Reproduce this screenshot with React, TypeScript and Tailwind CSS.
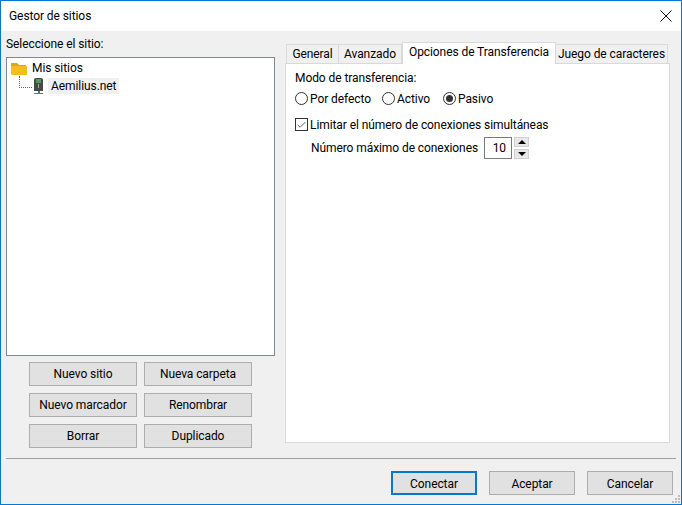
import { Check } from "lucide-react";

const siteButtons = ["Nuevo sitio", "Nueva carpeta", "Nuevo marcador", "Renombrar", "Borrar", "Duplicado"];

const Radio = ({ label, checked, width }: { label: string; checked?: boolean; width: string }) => (
  <div className={`flex items-center gap-[2px] ${width}`}>
    <span className="flex h-[13px] w-[13px] shrink-0 items-center justify-center rounded-full border border-[#333] bg-white">
      {checked && <span className="h-[7px] w-[7px] rounded-full bg-[#333]" />}
    </span>
    <span>{label}</span>
  </div>
);

const Tab = ({ label, className }: { label: string; className: string }) => (
  <div className={`flex h-[19px] items-center justify-center whitespace-nowrap border border-b-0 border-[#d9d9d9] bg-[#f0f0f0] ${className}`}>
    {label}
  </div>
);

const FolderIcon = () => (
  <svg width="16" height="15" viewBox="0 0 16 15">
    <path d="M0 2 H6 L8 4 H15 V7 H0 Z" fill="#e0a50f" />
    <path d="M0 5 H16 V14 H1 L0 13 Z" fill="#f5bd1f" />
  </svg>
);

const ServerIcon = () => (
  <svg width="11" height="17" viewBox="0 0 11 17">
    <path d="M1 2 Q1 0 3 0 H8 Q10 0 10 2 V13 H1 Z" fill="#474a47" />
    <rect x="3" y="1" width="5" height="4" fill="#4f9a58" />
    <rect x="5" y="6" width="1" height="4" fill="#a5aaa5" />
    <rect x="5" y="13" width="2" height="3" fill="#2f7fd0" />
    <rect x="1" y="15" width="9" height="1" fill="#2f7fd0" />
  </svg>
);

export default function App() {
  return (
    <div className="flex h-[505px] w-[682px] flex-col overflow-hidden border border-[#0078d7] bg-[#f0f0f0] font-['Roboto',sans-serif] text-[12px] leading-[16px] tracking-[-0.08px] text-black">
      {/* Title bar */}
      <div className="flex h-[30px] shrink-0 items-center justify-between bg-white pl-[8px] pr-[9px]">
        <span>Gestor de sitios</span>
        <svg width="12" height="12" viewBox="0 0 12 12">
          <path d="M0.5 0.5 L11.5 11.5 M11.5 0.5 L0.5 11.5" stroke="#111" strokeWidth="1" fill="none" />
        </svg>
      </div>

      <div className="relative flex flex-1 flex-col">
        <div className="flex h-[427px] shrink-0">
          {/* Site tree */}
          <div className="flex w-[284px] shrink-0 flex-col pl-[5px] pt-[5px]">
            <div className="h-[21px]">Seleccione el sitio:</div>
            <div className="h-[299px] w-[269px] border border-[#828790] bg-white pl-[4px] pt-[1px]">
              <div className="flex h-[18px] items-center gap-[5px]">
                <FolderIcon />
                <span>Mis sitios</span>
              </div>
              <div className="flex h-[18px] items-center">
                <div className="ml-[8px] mb-[8px] h-[12px] w-[13px] border-b border-l border-dotted border-[#666]" />
                <span className="ml-[1px]"><ServerIcon /></span>
                <span className="ml-[4px] bg-[#f0f0f0] px-[3px]">Aemilius.net</span>
              </div>
            </div>
            <div className="ml-[23px] mt-[6px] grid w-[223px] grid-cols-[108px_108px] gap-x-[7px] gap-y-[7px]">
              {siteButtons.map((label) => (
                <button key={label} className="h-[24px] border border-[#adadad] bg-[#e1e1e1]">
                  {label}
                </button>
              ))}
            </div>
          </div>

          {/* Tabs */}
          <div className="flex w-[385px] flex-col pt-[11px]">
            <div className="flex h-[21px] items-end pl-[1px]">
              <Tab label="General" className="w-[53px]" />
              <Tab label="Avanzado" className="w-[63px] border-l-0" />
              <div className="relative z-10 mb-[-1px] flex h-[22px] w-[154px] items-start justify-center whitespace-nowrap border border-b-0 border-[#d9d9d9] bg-white pt-[1px]">
                Opciones de Transferencia
              </div>
              <Tab label="Juego de caracteres" className="w-[112px] border-l-0" />
            </div>
            <div className="h-[380px] border border-[#d9d9d9] bg-white pl-[9px] pt-[5px]">
              <div className="h-[19px] leading-[19px]">Modo de transferencia:</div>
              <div className="flex h-[21px] items-center">
                <Radio label="Por defecto" width="w-[87px]" />
                <Radio label="Activo" width="w-[61px]" />
                <Radio label="Pasivo" checked width="w-[70px]" />
              </div>
              <div className="mt-[5px] flex h-[21px] items-center gap-[2px]">
                <span className="flex h-[13px] w-[13px] items-center justify-center border border-[#333] bg-white">
                  <Check size={12} strokeWidth={1.5} className="text-[#222]" />
                </span>
                <span>Limitar el número de conexiones simultáneas</span>
              </div>
              <div className="ml-[16px] mt-[1px] flex h-[23px] items-center">
                <span className="w-[173px] whitespace-nowrap">Número máximo de conexiones</span>
                <div className="flex h-[22px] w-[28px] items-center justify-end border border-[#7a7a7a] bg-white pr-[5px]">10</div>
                <div className="ml-[2px] flex h-[22px] w-[15px] flex-col justify-between">
                  <div className="flex h-[10px] items-center justify-center border border-[#d0d0d0] bg-[#e8e8e8]">
                    <span className="h-0 w-0 border-x-[4px] border-b-[4px] border-x-transparent border-b-black" />
                  </div>
                  <div className="flex h-[10px] items-center justify-center border border-[#d0d0d0] bg-[#e8e8e8]">
                    <span className="h-0 w-0 border-x-[4px] border-t-[4px] border-x-transparent border-t-black" />
                  </div>
                </div>
              </div>
            </div>
          </div>
        </div>

        {/* Footer */}
        <div className="ml-[5px] h-[1px] w-[670px] bg-[#a0a0a0]" />
        <div className="flex justify-end gap-[12px] pr-[8px] pt-[12px]">
          <button className="h-[24px] w-[86px] border-2 border-[#0078d7] bg-[#e1e1e1] pt-[1px]">Conectar</button>
          <button className="h-[24px] w-[86px] border border-[#adadad] bg-[#e1e1e1] pt-[1px]">Aceptar</button>
          <button className="h-[24px] w-[86px] border border-[#adadad] bg-[#e1e1e1] pt-[1px]">Cancelar</button>
        </div>
        {/* Size grip */}
        <svg width="10" height="10" viewBox="0 0 10 10" className="absolute bottom-0 right-0">
          {[[7, 1], [4, 4], [7, 4], [1, 7], [4, 7], [7, 7]].map(([x, y]) => (
            <rect key={`${x}-${y}`} x={x} y={y} width="2" height="2" fill="#bdbdbd" />
          ))}
        </svg>
      </div>
    </div>
  );
}
